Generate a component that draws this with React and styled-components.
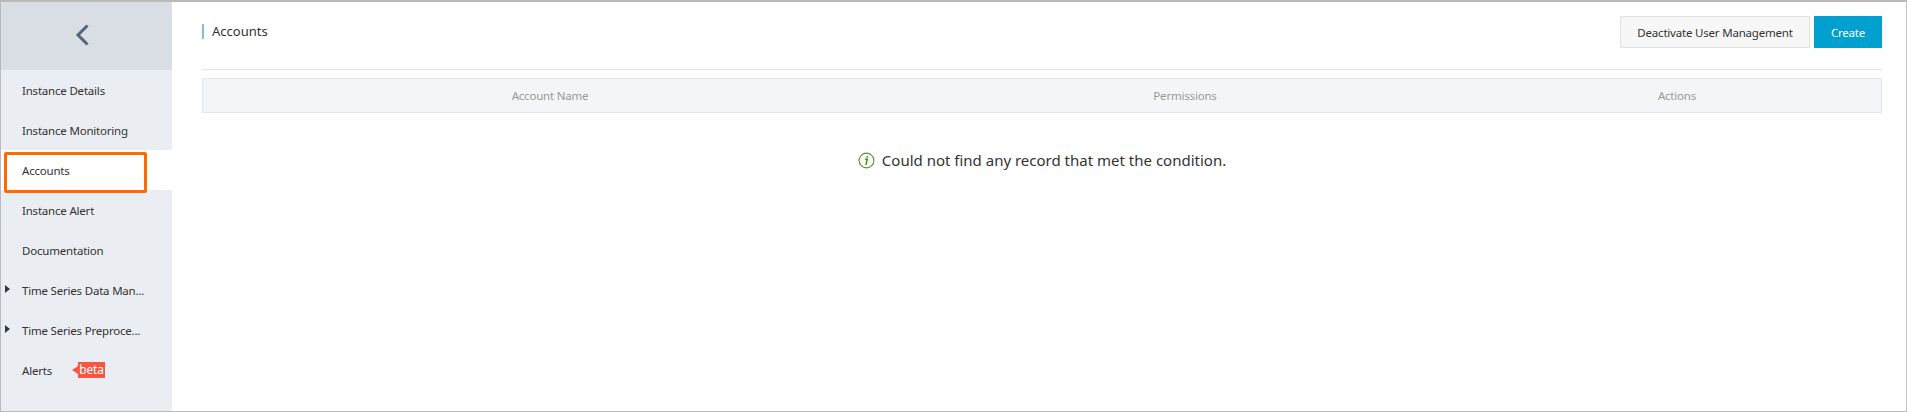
import React from "react";
import styled, { createGlobalStyle } from "styled-components";

const Global = createGlobalStyle`
  html, body { margin: 0; padding: 0; background: #fff; }
  body { font-family: "Noto Sans", "DejaVu Sans", sans-serif; font-size: 11.5px; letter-spacing: -0.2px; color: #333; }
`;

const Frame = styled.div`
  position: relative;
  box-sizing: border-box;
  width: 1907px;
  height: 412px;
  display: flex;
  overflow: hidden;
  border-top: 2px solid #b9b9b9;
  border-left: 1px solid #b9b9b9;
  border-right: 1px solid #c4c4c4;
  border-bottom: 1px solid #b9b9b9;
`;

const Sidebar = styled.aside`
  width: 171px;
  flex: none;
  background: #eaedf1;
  display: flex;
  flex-direction: column;
`;

const Collapse = styled.div`
  height: 68px;
  padding: 0 9px 2px 0;
  box-sizing: border-box;
  background: #d9dee4;
  display: flex;
  align-items: center;
  justify-content: center;
`;

const NavItem = styled.div`
  position: relative;
  height: 40px;
  display: flex;
  align-items: center;
  padding-left: 21px;
  background: ${(p) => (p.$active ? "#fff" : "transparent")};
  color: #333;
  white-space: nowrap;
`;

const Caret = styled.span`
  position: absolute;
  left: 4px;
  top: 15px;
  border-left: 5px solid #2f3a48;
  border-top: 4.5px solid transparent;
  border-bottom: 4.5px solid transparent;
`;

const Beta = styled.span`
  position: relative;
  box-sizing: border-box;
  margin-left: 26px;
  width: 27px;
  height: 16px;
  line-height: 15px;
  text-align: center;
  background: #fb5440;
  color: #fff;
  font-size: 12px;
  &::before {
    content: "";
    position: absolute;
    left: -6px;
    top: 4px;
    border-right: 6px solid #fb5440;
    border-top: 4px solid transparent;
    border-bottom: 4px solid transparent;
  }
`;

const Highlight = styled.div`
  position: absolute;
  left: 3px;
  top: 150px;
  width: 143px;
  height: 41px;
  box-sizing: border-box;
  border: 3px solid #ff6a00;
  border-radius: 2px;
  pointer-events: none;
`;

const Main = styled.main`
  flex: 1;
  min-width: 0;
  padding: 14px 24px 0 30px;
  display: flex;
  flex-direction: column;
`;

const Header = styled.div`
  height: 53px;
  display: flex;
  justify-content: space-between;
  align-items: flex-start;
  border-bottom: 1px solid #dfe2e5;
`;

const Title = styled.h1`
  margin: 8px 0 0;
  height: 15px;
  line-height: 15px;
  padding-left: 8px;
  border-left: 2px solid #88b7e0;
  font-size: 13px;
  letter-spacing: 0;
  font-weight: 400;
  color: #333;
`;

const Actions = styled.div`
  display: flex;
  gap: 4px;
`;

const Button = styled.button`
  box-sizing: border-box;
  height: 32px;
  width: ${(p) => p.$w}px;
  padding: 0;
  font: inherit;
  letter-spacing: inherit;
  color: ${(p) => (p.$primary ? "#fff" : "#333")};
  background: ${(p) => (p.$primary ? "#00a0d1" : "#f7f7f7")};
  border: 1px solid ${(p) => (p.$primary ? "#00a0d1" : "#e1e3e5")};
`;

const TableHead = styled.div`
  box-sizing: border-box;
  margin-top: 8px;
  height: 35px;
  display: grid;
  grid-template-columns: 694px 576px 1fr;
  align-items: center;
  background: #f3f5f8;
  border: 1px solid #e1e6eb;
  color: #999;
  text-align: center;
`;

const Empty = styled.div`
  margin-top: 37px;
  display: flex;
  justify-content: center;
  align-items: center;
  gap: 7px;
  font-size: 15px;
  letter-spacing: 0;
  color: #333;
`;

export default function App() {
  return (
    <Frame>
      <Global />
      <Sidebar>
        <Collapse>
          <svg width="14" height="22" viewBox="0 0 14 22" fill="none">
            <path d="M12.5 1.5 3 11l9.5 9.5" stroke="#54647a" strokeWidth="3" />
          </svg>
        </Collapse>
        <NavItem>Instance Details</NavItem>
        <NavItem>Instance Monitoring</NavItem>
        <NavItem $active>Accounts</NavItem>
        <NavItem>Instance Alert</NavItem>
        <NavItem>Documentation</NavItem>
        <NavItem><Caret />Time Series Data Man...</NavItem>
        <NavItem><Caret />Time Series Preproce...</NavItem>
        <NavItem>Alerts<Beta>beta</Beta></NavItem>
      </Sidebar>
      <Highlight />
      <Main>
        <Header>
          <Title>Accounts</Title>
          <Actions>
            <Button $w={190}>Deactivate User Management</Button>
            <Button $primary $w={68}>Create</Button>
          </Actions>
        </Header>
        <TableHead>
          <span>Account Name</span>
          <span>Permissions</span>
          <span>Actions</span>
        </TableHead>
        <Empty>
          <svg width="17" height="17" viewBox="0 0 17 17" fill="none">
            <circle cx="8.5" cy="8.5" r="7.4" stroke="#4d9a2a" strokeWidth="1.1" />
            <path d="M7.2 7.2h2L8 12.8M9.3 4.1 9 5.6" stroke="#3d8a1e" strokeWidth="1.5" />
          </svg>
          <span>Could not find any record that met the condition.</span>
        </Empty>
      </Main>
    </Frame>
  );
}
